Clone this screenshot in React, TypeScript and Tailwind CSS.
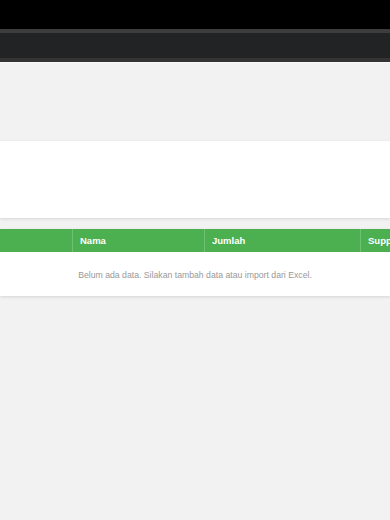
export default function App() {
  return (
    <div className="w-[390px] h-[520px] overflow-hidden bg-[#f2f2f2] font-['Liberation_Sans',Arial,sans-serif]">
      <div className="h-[29px] bg-black" />
      <div className="h-[4px] bg-[#3d3d3d]" />
      <div className="h-[25px] bg-[#222324]" />
      <div className="h-[4px] bg-[#343434]" />
      <div className="h-[1px] bg-[#fafafa]" />
      <div className="h-[78px] bg-[#f2f2f2]" />
      <div className="h-[77px] bg-white shadow-[0_1px_3px_rgba(0,0,0,0.12)]" />
      <div className="h-[11px]" />
      <div className="w-[390px] overflow-hidden bg-white shadow-[0_1px_3px_rgba(0,0,0,0.12)]">
        <div className="flex w-[460px] h-[23px] bg-[#4caf50] text-white text-[9.5px] font-bold">
          <div className="w-[73px] border-r border-[#6fc072]" />
          <div className="w-[132px] border-r border-[#6fc072] flex items-center pl-[7px] pt-[1px]">Nama</div>
          <div className="w-[156px] border-r border-[#6fc072] flex items-center pl-[7px] pt-[1px]">Jumlah</div>
          <div className="flex-1 flex items-center pl-[7px] pt-[1px]">Supplier</div>
        </div>
        <div className="h-[44px] flex items-center justify-center pt-[3px] text-[8.7px] text-[#999999]">
          Belum ada data. Silakan tambah data atau import dari Excel.
        </div>
      </div>
    </div>
  );
}
